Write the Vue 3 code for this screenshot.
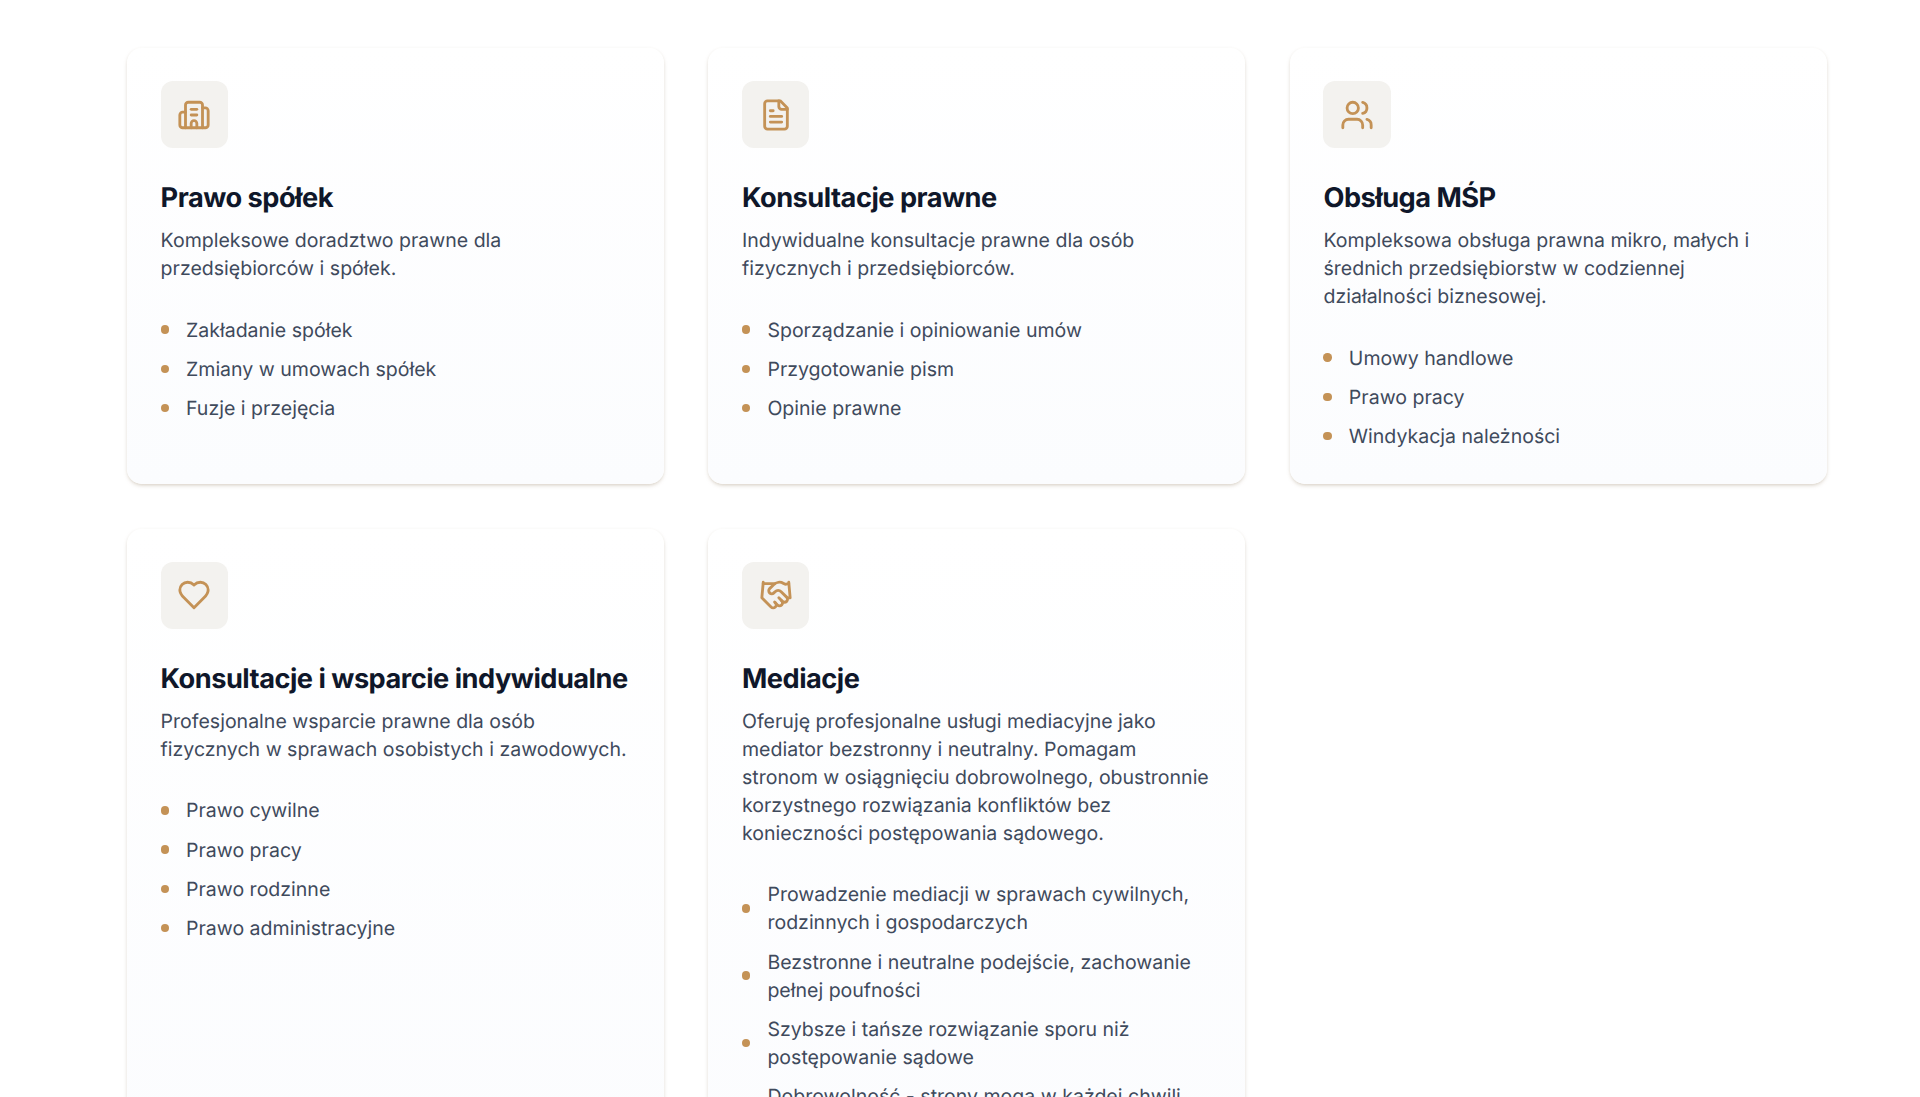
<template>
  <div class="page">
    <div class="services">
      <div v-for="card in cards" :key="card.title" class="card">
        <div class="card-icon">
          <svg width="34" height="34" viewBox="0 0 24 24" fill="none" stroke="currentColor" stroke-width="2" stroke-linecap="round" stroke-linejoin="round">
            <path v-for="d in card.paths" :key="d" :d="d" />
          </svg>
        </div>
        <h3>{{ card.title }}</h3>
        <p>{{ card.text }}</p>
        <ul>
          <li v-for="item in card.items" :key="item">
            <span class="dot"></span>
            <span>{{ item }}</span>
          </li>
        </ul>
      </div>
    </div>
  </div>
</template>

<script setup>
const cards = [
  {
    title: 'Prawo spółek',
    text: 'Kompleksowe doradztwo prawne dla przedsiębiorców i spółek.',
    paths: [
      'M10 12h4', 'M10 8h4', 'M14 21v-3a2 2 0 0 0-4 0v3',
      'M6 10H4a2 2 0 0 0-2 2v7a2 2 0 0 0 2 2h16a2 2 0 0 0 2-2V9a2 2 0 0 0-2-2h-2',
      'M6 21V5a2 2 0 0 1 2-2h8a2 2 0 0 1 2 2v16'
    ],
    items: ['Zakładanie spółek', 'Zmiany w umowach spółek', 'Fuzje i przejęcia']
  },
  {
    title: 'Konsultacje prawne',
    text: 'Indywidualne konsultacje prawne dla osób fizycznych i przedsiębiorców.',
    paths: [
      'M15 2H6a2 2 0 0 0-2 2v16a2 2 0 0 0 2 2h12a2 2 0 0 0 2-2V7Z',
      'M14 2v4a2 2 0 0 0 2 2h4', 'M10 9H8', 'M16 13H8', 'M16 17H8'
    ],
    items: ['Sporządzanie i opiniowanie umów', 'Przygotowanie pism', 'Opinie prawne']
  },
  {
    title: 'Obsługa MŚP',
    text: 'Kompleksowa obsługa prawna mikro, małych i średnich przedsiębiorstw w codziennej działalności biznesowej.',
    paths: [
      'M16 21v-2a4 4 0 0 0-4-4H6a4 4 0 0 0-4 4v2',
      'M13 7a4 4 0 1 1-8 0a4 4 0 1 1 8 0',
      'M22 21v-2a4 4 0 0 0-3-3.87', 'M16 3.13a4 4 0 0 1 0 7.75'
    ],
    items: ['Umowy handlowe', 'Prawo pracy', 'Windykacja należności']
  },
  {
    title: 'Konsultacje i wsparcie indywidualne',
    text: 'Profesjonalne wsparcie prawne dla osób fizycznych w sprawach osobistych i zawodowych.',
    paths: [
      'M19 14c1.49-1.46 3-3.21 3-5.5A5.5 5.5 0 0 0 16.5 3c-1.76 0-3 .5-4.5 2-1.5-1.5-2.74-2-4.5-2A5.5 5.5 0 0 0 2 8.5c0 2.3 1.5 4.05 3 5.5l7 7Z'
    ],
    items: ['Prawo cywilne', 'Prawo pracy', 'Prawo rodzinne', 'Prawo administracyjne']
  },
  {
    title: 'Mediacje',
    text: 'Oferuję profesjonalne usługi mediacyjne jako mediator bezstronny i neutralny. Pomagam stronom w osiągnięciu dobrowolnego, obustronnie korzystnego rozwiązania konfliktów bez konieczności postępowania sądowego.',
    paths: [
      'm11 17 2 2a1 1 0 1 0 3-3',
      'm14 14 2.5 2.5a1 1 0 1 0 3-3l-3.88-3.88a3 3 0 0 0-4.24 0l-.88.88a1 1 0 1 1-3-3l2.81-2.81a5.79 5.79 0 0 1 7.06-.87l.47.28a2 2 0 0 0 1.42.25L21 4',
      'm21 3 1 11h-2', 'M3 3 2 14l6.5 6.5a1 1 0 1 0 3-3', 'M3 4h8'
    ],
    items: [
      'Prowadzenie mediacji w sprawach cywilnych, rodzinnych i gospodarczych',
      'Bezstronne i neutralne podejście, zachowanie pełnej poufności',
      'Szybsze i tańsze rozwiązanie sporu niż postępowanie sądowe',
      'Dobrowolność - strony mogą w każdej chwili zakończyć mediację'
    ]
  }
]
</script>

<style>
html, body {
  background: #ffffff;
}
</style>

<style scoped>
.page {
  height: 100vh;
  overflow: hidden;
  padding: 48px 93.5px 0 127px;
  box-sizing: border-box;
  font-family: Inter, "Liberation Sans", sans-serif;
  text-rendering: geometricPrecision;
}

.services {
  display: grid;
  grid-template-columns: repeat(3, 1fr);
  gap: 44.8px;
  align-items: stretch;
}

.card {
  padding: 33px 33.6px 34px;
  background: linear-gradient(180deg, #ffffff 0%, #fbfcfe 100%);
  border-radius: 15px;
  box-shadow: 0 2px 4px -1px rgba(140, 115, 85, 0.38), 0 0 3px rgba(140, 115, 85, 0.03);
}

.card-icon {
  width: 67.2px;
  height: 67.2px;
  display: flex;
  align-items: center;
  justify-content: center;
  background: #f3f2ef;
  border-radius: 12px;
  color: #c49256;
}

h3 {
  margin: 32.8px 0 11px;
  font-size: 27.2px;
  line-height: 34px;
  font-weight: 700;
  letter-spacing: -0.5px;
  color: #0f172a;
}

p {
  margin: 0 0 33.6px;
  font-size: 19.55px;
  line-height: 28px;
  color: #3f4a5c;
}

ul {
  list-style: none;
  margin: 0;
  padding: 0;
  display: flex;
  flex-direction: column;
  gap: 11.2px;
}

li {
  display: flex;
  align-items: center;
  gap: 17px;
  font-size: 19.55px;
  line-height: 28px;
  color: #3f4a5c;
}

.dot {
  flex: none;
  width: 8.4px;
  height: 8.4px;
  border-radius: 50%;
  background: #c49256;
}
</style>
